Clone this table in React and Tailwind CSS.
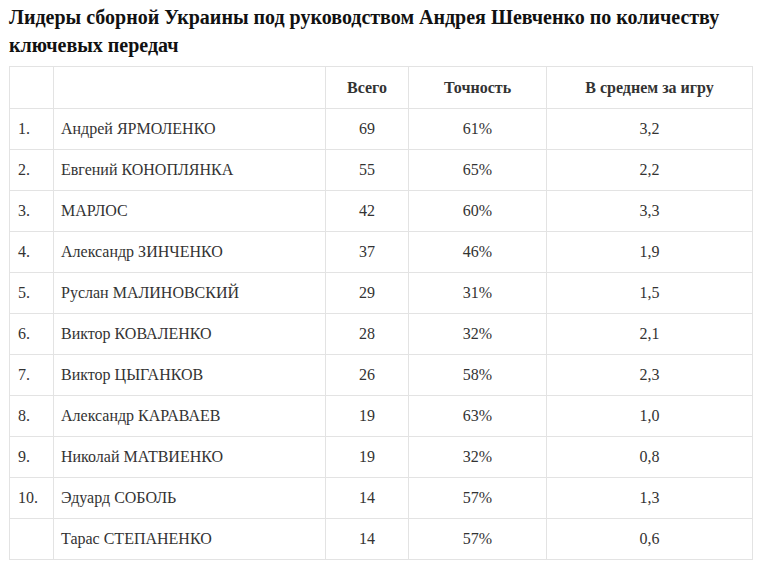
import React from 'react';

const rows = [
  ['1.', 'Андрей ЯРМОЛЕНКО', '69', '61%', '3,2'],
  ['2.', 'Евгений КОНОПЛЯНКА', '55', '65%', '2,2'],
  ['3.', 'МАРЛОС', '42', '60%', '3,3'],
  ['4.', 'Александр ЗИНЧЕНКО', '37', '46%', '1,9'],
  ['5.', 'Руслан МАЛИНОВСКИЙ', '29', '31%', '1,5'],
  ['6.', 'Виктор КОВАЛЕНКО', '28', '32%', '2,1'],
  ['7.', 'Виктор ЦЫГАНКОВ', '26', '58%', '2,3'],
  ['8.', 'Александр КАРАВАЕВ', '19', '63%', '1,0'],
  ['9.', 'Николай МАТВИЕНКО', '19', '32%', '0,8'],
  ['10.', 'Эдуард СОБОЛЬ', '14', '57%', '1,3'],
  ['', 'Тарас СТЕПАНЕНКО', '14', '57%', '0,6'],
];

const App = () => {
  return (
    <div className="w-[762px] h-[571px] bg-white px-[9px] pt-[3px] font-['Liberation_Serif','Times_New_Roman',serif] text-[#333]">
      <h2 className="text-[20px] leading-[28px] font-bold text-[#111] mb-[7px]">
        Лидеры сборной Украины под руководством Андрея Шевченко по количеству ключевых передач
      </h2>
      <table className="w-[743px] border-collapse table-fixed text-[16px]">
        <colgroup>
          <col className="w-[44px]" />
          <col className="w-[272px]" />
          <col className="w-[83px]" />
          <col className="w-[138px]" />
          <col className="w-[206px]" />
        </colgroup>
        <thead>
          <tr className="h-[42px]">
            <th className="border border-[#e3e3e3]" />
            <th className="border border-[#e3e3e3]" />
            <th className="border border-[#e3e3e3] font-bold text-[#333]">Всего</th>
            <th className="border border-[#e3e3e3] font-bold text-[#333]">Точность</th>
            <th className="border border-[#e3e3e3] font-bold text-[#333]">В среднем за игру</th>
          </tr>
        </thead>
        <tbody>
          {rows.map((r, i) => (
            <tr key={i} className="h-[41px]">
              <td className="border border-[#e3e3e3] pl-[8px]">{r[0]}</td>
              <td className="border border-[#e3e3e3] pl-[7px]">{r[1]}</td>
              <td className="border border-[#e3e3e3] text-center">{r[2]}</td>
              <td className="border border-[#e3e3e3] text-center">{r[3]}</td>
              <td className="border border-[#e3e3e3] text-center">{r[4]}</td>
            </tr>
          ))}
        </tbody>
      </table>
    </div>
  );
};

export default App;
